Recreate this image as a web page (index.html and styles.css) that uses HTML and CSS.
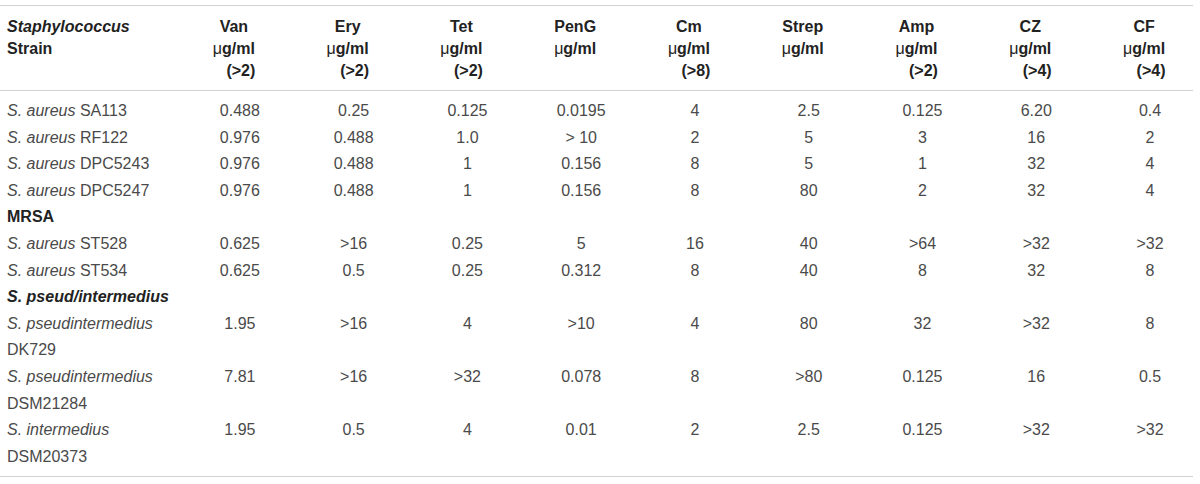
FILE: index.html
```html
<!DOCTYPE html>
<html lang="en">
<head>
    <meta charset="UTF-8">
    <title>MIC values</title>
    <link rel="stylesheet" href="styles.css">
</head>
<body>
    <table class="mic-table">
        <colgroup>
            <col class="strain-col">
            <col span="9">
        </colgroup>
        <thead>
            <tr>
                <th class="strain"><em>Staphylococcus</em><br>Strain</th>
                <th>Van<br><span class="mu">&mu;</span>g/ml<br><span class="bp">(&gt;2)</span></th>
                <th>Ery<br><span class="mu">&mu;</span>g/ml<br><span class="bp">(&gt;2)</span></th>
                <th>Tet<br><span class="mu">&mu;</span>g/ml<br><span class="bp">(&gt;2)</span></th>
                <th>PenG<br><span class="mu">&mu;</span>g/ml</th>
                <th>Cm<br><span class="mu">&mu;</span>g/ml<br><span class="bp">(&gt;8)</span></th>
                <th>Strep<br><span class="mu">&mu;</span>g/ml</th>
                <th>Amp<br><span class="mu">&mu;</span>g/ml<br><span class="bp">(&gt;2)</span></th>
                <th>CZ<br><span class="mu">&mu;</span>g/ml<br><span class="bp">(&gt;4)</span></th>
                <th>CF<br><span class="mu">&mu;</span>g/ml<br><span class="bp">(&gt;4)</span></th>
            </tr>
        </thead>
        <tbody>
            <tr>
                <td class="strain"><em>S. aureus</em> SA113</td>
                <td>0.488</td><td>0.25</td><td>0.125</td><td>0.0195</td><td>4</td><td>2.5</td><td>0.125</td><td>6.20</td><td>0.4</td>
            </tr>
            <tr>
                <td class="strain"><em>S. aureus</em> RF122</td>
                <td>0.976</td><td>0.488</td><td>1.0</td><td>&gt; 10</td><td>2</td><td>5</td><td>3</td><td>16</td><td>2</td>
            </tr>
            <tr>
                <td class="strain"><em>S. aureus</em> DPC5243</td>
                <td>0.976</td><td>0.488</td><td>1</td><td>0.156</td><td>8</td><td>5</td><td>1</td><td>32</td><td>4</td>
            </tr>
            <tr>
                <td class="strain"><em>S. aureus</em> DPC5247</td>
                <td>0.976</td><td>0.488</td><td>1</td><td>0.156</td><td>8</td><td>80</td><td>2</td><td>32</td><td>4</td>
            </tr>
            <tr class="group">
                <td class="strain" colspan="10"><strong>MRSA</strong></td>
            </tr>
            <tr>
                <td class="strain"><em>S. aureus</em> ST528</td>
                <td>0.625</td><td>&gt;16</td><td>0.25</td><td>5</td><td>16</td><td>40</td><td>&gt;64</td><td>&gt;32</td><td>&gt;32</td>
            </tr>
            <tr>
                <td class="strain"><em>S. aureus</em> ST534</td>
                <td>0.625</td><td>0.5</td><td>0.25</td><td>0.312</td><td>8</td><td>40</td><td>8</td><td>32</td><td>8</td>
            </tr>
            <tr class="group">
                <td class="strain" colspan="10"><strong><em>S. pseud/intermedius</em></strong></td>
            </tr>
            <tr>
                <td class="strain"><em>S. pseudintermedius</em><br>DK729</td>
                <td>1.95</td><td>&gt;16</td><td>4</td><td>&gt;10</td><td>4</td><td>80</td><td>32</td><td>&gt;32</td><td>8</td>
            </tr>
            <tr>
                <td class="strain"><em>S. pseudintermedius</em><br>DSM21284</td>
                <td>7.81</td><td>&gt;16</td><td>&gt;32</td><td>0.078</td><td>8</td><td>&gt;80</td><td>0.125</td><td>16</td><td>0.5</td>
            </tr>
            <tr>
                <td class="strain"><em>S. intermedius</em><br>DSM20373</td>
                <td>1.95</td><td>0.5</td><td>4</td><td>0.01</td><td>2</td><td>2.5</td><td>0.125</td><td>&gt;32</td><td>&gt;32</td>
            </tr>
        </tbody>
    </table>
</body>
</html>
```

FILE: styles.css
```css
body {
    margin: 0;
    padding-top: 5px;
    background-color: white;
    font-family: "Liberation Sans", Arial, sans-serif;
    font-size: 16px;
}
.mic-table {
    width: 1193px;
    table-layout: fixed;
    border-collapse: collapse;
    border-top: 1px solid #d2d2d2;
    border-bottom: 1px solid #d2d2d2;
}
.strain-col {
    width: 169px;
}
.mic-table th {
    vertical-align: top;
    text-align: center;
    font-weight: bold;
    line-height: 22px;
    color: #222;
    padding: 10px 0 8px 16px;
    border-bottom: 1px solid #d2d2d2;
}
.mic-table th .mu {
    font-weight: normal;
}
.mic-table th .bp {
    display: inline-block;
    padding-left: 14px;
}
.mic-table td {
    vertical-align: top;
    text-align: center;
    line-height: 26.6px;
    color: #4a4a4a;
    padding: 0 0 0 28px;
}
.mic-table .strain {
    text-align: left;
    padding-left: 7px;
}
.mic-table .group td {
    color: #222;
}
.mic-table tbody tr:first-child td {
    padding-top: 7px;
}
.mic-table tbody tr:last-child td {
    padding-bottom: 6px;
}
```
